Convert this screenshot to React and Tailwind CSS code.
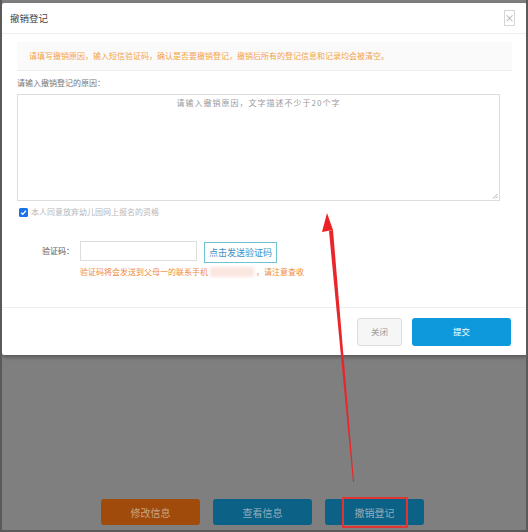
import React from "react";

const font = { fontFamily: '"Noto Sans CJK SC", "Noto Sans", sans-serif' };

export default function App() {
  return (
    <div
      className="relative w-[528px] h-[532px] overflow-hidden bg-[#7f7f7f] border-l-2 border-r-2 border-b-2 border-[#5a5a5a]"
      style={font}
    >
      {/* underlying page (dimmed) */}
      <div className="flex h-full flex-col justify-end pb-[5px]">
        <div className="flex gap-[13px] pl-[99px]">
          <div className="flex h-[26px] w-[99px] items-center justify-center rounded-[3px] bg-[#a04a0b] text-[10px] text-[#c9a587]">
            修改信息
          </div>
          <div className="flex h-[26px] w-[99px] items-center justify-center rounded-[3px] bg-[#0b6186] text-[10px] text-[#93aebb]">
            查看信息
          </div>
          <div className="flex h-[26px] w-[99px] items-center justify-center rounded-[3px] bg-[#0b6186] text-[10px] text-[#93aebb]">
            撤销登记
          </div>
        </div>
      </div>

      {/* modal */}
      <div className="absolute left-0 top-[3px] w-[525px] h-[352px] flex flex-col rounded-[2px] bg-white shadow-[0_2px_4px_rgba(0,0,0,0.35)]">
        <div className="flex h-[31px] items-center justify-between border-b border-[#eeeeee] pl-[8px] pr-[12px]">
          <span className="text-[9.5px] text-[#444444]">撤销登记</span>
          <span className="flex h-[16px] w-[11px] items-center justify-center border border-[#d6d6d6] text-[10px] leading-none text-[#aaaaaa]">
            ×
          </span>
        </div>

        <div className="flex flex-1 flex-col px-[15px] pt-[8px]">
          <div className="flex h-[29px] items-center border-b border-[#eeeeee] bg-[#fafafa] pl-[12px] text-[8px] text-[#f5a346]">
            请填写撤销原因，输入短信验证码，确认是否要撤销登记，撤销后所有的登记信息和记录均会被清空。
          </div>

          <div className="mt-[6px] text-[8px] text-[#777777]">请输入撤销登记的原因：</div>

          <div className="relative mt-[5px] h-[107px] w-[483px] border border-[#dddddd]">
            <div className="pt-[2px] text-center text-[8px] tracking-[1px] text-[#999999]">
              请输入撤销原因，文字描述不少于20个字
            </div>
            <svg className="absolute bottom-[1px] right-[1px]" width="6" height="6" viewBox="0 0 6 6">
              <path d="M5.5 1 L1 5.5 M5.5 3.5 L3.5 5.5" stroke="#999" strokeWidth="0.8" />
            </svg>
          </div>

          <div className="mt-[5px] flex items-center pl-[2px]">
            <span className="flex h-[9px] w-[9px] items-center justify-center rounded-[1.5px] bg-[#1a73e8]">
              <svg width="7" height="7" viewBox="0 0 8 8">
                <path d="M1.3 4.2 L3.2 6 L6.8 1.8" stroke="#fff" strokeWidth="1.5" fill="none" />
              </svg>
            </span>
            <span className="ml-[3px] text-[8px] text-[#b8b8b8]">本人同意放弃幼儿园网上报名的资格</span>
          </div>

          <div className="mt-[21px] flex items-center">
            <span className="w-[57px] text-right text-[8px] text-[#555555]">验证码：</span>
            <span className="ml-[6px] h-[20px] w-[117px] border border-[#dddddd]" />
            <span className="ml-[7px] mt-[3px] flex h-[21px] items-center border border-[#6fc3d6] px-[4px] text-[9px] text-[#3d8fc4]">
              点击发送验证码
            </span>
          </div>

          <div className="mt-[3px] flex items-center pl-[63px] text-[8px] text-[#f08a3c]">
            <span>验证码将会发送到父母一的联系手机</span>
            <span className="mx-[2px] h-[10px] w-[44px] bg-[#fbe6e0] blur-[1.5px]" />
            <span>，请注意查收</span>
          </div>
        </div>

        <div className="flex h-[48px] items-center justify-end gap-[10px] border-t border-[#eeeeee] pr-[16px]">
          <span className="flex h-[28px] w-[45px] items-center justify-center rounded-[3px] border border-[#dddddd] bg-[#f6f6f6] text-[8.5px] text-[#999999]">
            关闭
          </span>
          <span className="flex h-[28px] w-[99px] items-center justify-center rounded-[3px] bg-[#0f99dd] text-[8.5px] text-white">
            提交
          </span>
        </div>
      </div>

      {/* annotation arrow */}
      <svg className="absolute left-0 top-0" width="528" height="532" viewBox="0 0 528 532">
        <polygon points="327,231 331,230 352,482 351,482" fill="#e8262b" />
        <polygon points="325,213 320,232 331,230" fill="#ee2222" />
      </svg>

      {/* annotation box */}
      <div className="absolute left-[340px] top-[497px] h-[31px] w-[66px] border-2 border-[#e23434]" />
    </div>
  );
}
